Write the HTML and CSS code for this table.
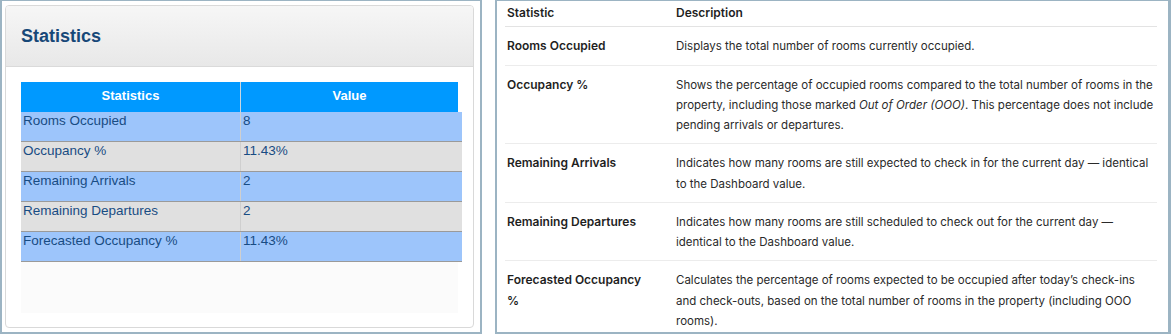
FILE: index.html
```html
<!DOCTYPE html>
<html>
<head>
<meta charset="utf-8">
<link rel="stylesheet" href="styles.css">
</head>
<body>
<div class="page">
  <div class="frame left">
    <div class="card">
      <div class="card-head"><h2 class="card-title">Statistics</h2></div>
      <div class="card-body">
        <div class="stats-head">
          <div class="sh-cell">Statistics</div>
          <div class="sh-cell">Value</div>
        </div>
        <div class="stats-row blue"><div class="sc">Rooms Occupied</div><div class="sc">8</div></div>
        <div class="stats-row gray"><div class="sc">Occupancy %</div><div class="sc">11.43%</div></div>
        <div class="stats-row blue"><div class="sc">Remaining Arrivals</div><div class="sc">2</div></div>
        <div class="stats-row gray"><div class="sc">Remaining Departures</div><div class="sc">2</div></div>
        <div class="stats-row blue"><div class="sc">Forecasted Occupancy %</div><div class="sc">11.43%</div></div>
        <div class="stats-empty"></div>
      </div>
    </div>
  </div>
  <div class="frame right">
    <table class="doc">
      <thead>
        <tr><th class="c1">Statistic</th><th class="c2">Description</th></tr>
      </thead>
      <tbody>
        <tr><td class="c1">Rooms Occupied</td><td class="c2">Displays the total number of rooms currently occupied.</td></tr>
        <tr><td class="c1">Occupancy %</td><td class="c2">Shows the percentage of occupied rooms compared to the total number of rooms in the property, including those marked <em>Out of Order (OOO)</em>. This percentage does not include pending arrivals or departures.</td></tr>
        <tr><td class="c1">Remaining Arrivals</td><td class="c2">Indicates how many rooms are still expected to check in for the current day — identical to the Dashboard value.</td></tr>
        <tr><td class="c1">Remaining Departures</td><td class="c2">Indicates how many rooms are still scheduled to check out for the current day — identical to the Dashboard value.</td></tr>
        <tr><td class="c1">Forecasted Occupancy %</td><td class="c2">Calculates the percentage of rooms expected to be occupied after today’s check-ins and check-outs, based on the total number of rooms in the property (including OOO rooms).</td></tr>
      </tbody>
    </table>
  </div>
</div>
</body>
</html>
```

FILE: styles.css
```css
html, body {
  margin: 0;
  padding: 0;
  background: #ffffff;
}
.page {
  display: flex;
  gap: 13px;
  width: 1171px;
  height: 335px;
}
.frame {
  box-sizing: border-box;
  height: 334px;
  border-style: solid;
  border-color: #9cb4c3;
  border-width: 1px 2px 2px 2px;
  overflow: hidden;
}
.left {
  width: 482px;
  flex: none;
  padding: 4px 6px 4px 3px;
}
.right {
  flex: 1;
  border-right-width: 3px;
}

/* left card */
.card {
  box-sizing: border-box;
  height: 323px;
  border: 1px solid #d9d9d9;
  border-radius: 4px;
  background: #ffffff;
  overflow: hidden;
  font-family: "Liberation Sans", Arial, sans-serif;
}
.card-head {
  background: linear-gradient(#f6f6f6, #e8e8e8);
  border-bottom: 1px solid #dadada;
  padding: 19px 15px;
}
.card-title {
  margin: 0;
  font-size: 18px;
  line-height: 22px;
  font-weight: bold;
  color: #174878;
}
.card-body {
  padding: 15px 0 0 15px;
}
.stats-head {
  display: grid;
  grid-template-columns: 219px 218px;
  width: 437px;
  height: 30px;
  background: #0099ff;
}
.sh-cell {
  color: #ffffff;
  font-weight: bold;
  font-size: 13px;
  line-height: 28px;
  text-align: center;
}
.sh-cell + .sh-cell {
  border-left: 1px solid #c9d6e0;
}
.stats-row {
  display: grid;
  grid-template-columns: 219px 222px;
  width: 441px;
  height: 30px;
  box-sizing: border-box;
  border-bottom: 1px solid #9a9a9a;
}
.stats-row.blue { background: #9dc5fb; }
.stats-row.gray { background: #e0e0e0; }
.sc {
  font-size: 13.5px;
  line-height: 16px;
  padding: 1px 2px 0;
  color: #184c83;
}
.sc + .sc {
  border-left: 1px solid #cfcfcf;
}
.stats-empty {
  width: 437px;
  height: 51px;
  background: #fbfbfb;
}

/* right doc table */
.doc {
  margin-left: 8px;
  width: 652px;
  border-collapse: collapse;
  font-family: Inter, "Noto Sans", sans-serif;
  font-size: 12px;
  line-height: 20.25px;
  color: #1f1f1f;
}
.doc th {
  text-align: left;
  font-weight: 600;
  padding: 2px 2px 3px;
  border-bottom: 1px solid #e3e3e3;
}
.doc td {
  vertical-align: top;
  padding: 9px 2px 8px;
  border-bottom: 1px solid #ececec;
}
.doc .c1 {
  width: 141px;
  padding-right: 26px;
  font-weight: 600;
}
.doc td.c2 {
  font-size: 11.5px;
  font-weight: 400;
  color: #2a2a2a;
}
.doc tbody tr:last-child td {
  border-bottom: none;
}
```
